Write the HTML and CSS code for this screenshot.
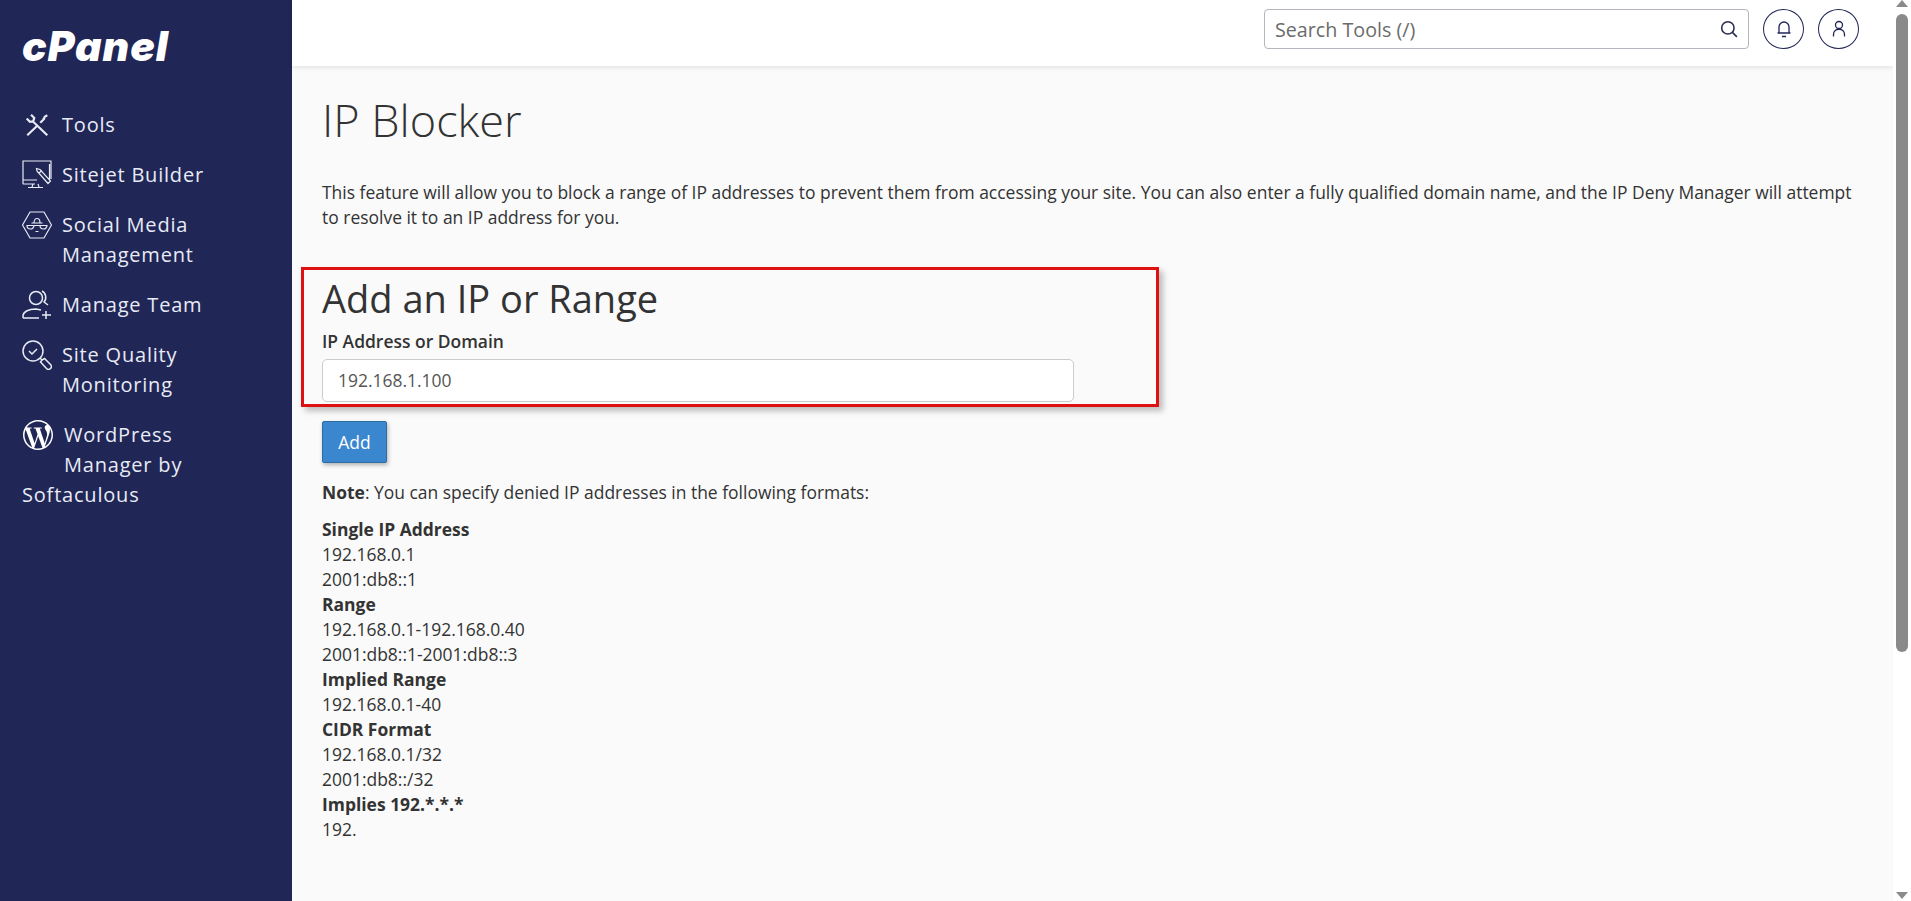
FILE: index.html
```html
<!DOCTYPE html>
<html lang="en">
<head>
<meta charset="utf-8">
<title>IP Blocker</title>
<link rel="stylesheet" href="styles.css">
</head>
<body>
<aside class="sidebar">
  <div class="logo">cPanel</div>
  <nav class="nav">
    <a class="nav-item"><svg class="ico ico-tools" viewBox="0 0 24 24"><path d="M3 21.500 12 13M15 10l3.500-3.500.5-2 2.500-1.500M17.500 5.500l1.500 1.500M2.500 6 5.500 9l3-.5 1-3L6.500 2.500M8 8.500 21.500 21.500"/></svg><span class="nav-text">Tools</span></a>
    <a class="nav-item"><svg class="ico" viewBox="0 0 30 30"><path d="M13 24H1.500a1 1 0 0 1-.5-1V1h28v18M1 20h14M11 24l-1 3M16 24l1 3M6 27.500h15M27.500 20V4M15 11l11 12.500 2.500-2.500L18 9.500l-3.500-1zM17 13l3-2.500"/></svg><span class="nav-text">Sitejet Builder</span></a>
    <a class="nav-item"><svg class="ico" viewBox="0 0 30 30"><path d="M8 2h14l7.500 13L22 28H8L.5 15zM9.500 13h11M12 13c0-6 6-6 6 0M5 15.500h7a3.500 3.500 0 0 1-7 0zM18 15.500h7a3.500 3.500 0 0 1-7 0zM12 15.500h6M13.500 21.500h3"/></svg><span class="nav-text">Social Media<br>Management</span></a>
    <a class="nav-item"><svg class="ico ico-bold" viewBox="0 0 30 30"><circle cx="14" cy="8" r="6.500"/><path d="M20 1c4 2 5 8 2 11l4 3M1 28v-2c0-4 5-7 13-7l5 1M1 28h16M24 21v8M20 25h9"/></svg><span class="nav-text">Manage Team</span></a>
    <a class="nav-item"><svg class="ico ico-bold" viewBox="0 0 30 30"><circle cx="11" cy="11" r="10"/><path d="M7 11l3 3 5-5M18 18l2 2M20 20l-1.500 2 6 6.500a2 2 0 0 0 4-4l-6-6z"/></svg><span class="nav-text">Site Quality<br>Monitoring</span></a>
    <a class="nav-wp"><svg class="ico ico-wp" viewBox="0 0 24 24"><path d="M21.469 6.825c.84 1.537 1.318 3.3 1.318 5.175 0 3.979-2.156 7.456-5.363 9.325l3.295-9.527c.615-1.54.82-2.771.82-3.864 0-.405-.026-.78-.07-1.11m-7.981.105c.647-.03 1.232-.105 1.232-.105.582-.075.514-.93-.067-.899 0 0-1.755.135-2.88.135-1.064 0-2.85-.15-2.85-.15-.585-.03-.661.855-.075.885 0 0 .54.061 1.125.09l1.68 4.605-2.37 7.08L5.354 6.9c.649-.03 1.234-.1 1.234-.1.585-.075.516-.93-.065-.896 0 0-1.746.138-2.874.138-.2 0-.438-.008-.69-.015C4.911 3.15 8.235 1.215 12 1.215c2.809 0 5.365 1.072 7.286 2.833-.046-.003-.091-.009-.141-.009-1.06 0-1.812.923-1.812 1.914 0 .89.513 1.643 1.06 2.531.411.72.89 1.643.89 2.977 0 .915-.354 1.994-.821 3.479l-1.075 3.585-3.9-11.61.001.014zM12 22.784c-1.059 0-2.081-.153-3.048-.437l3.237-9.406 3.315 9.087c.024.053.05.101.078.149-1.12.393-2.325.609-3.582.609M1.211 12c0-1.564.336-3.05.935-4.39L7.29 21.709C3.694 19.96 1.212 16.271 1.211 12M12 0C5.385 0 0 5.385 0 12s5.385 12 12 12 12-5.385 12-12S18.615 0 12 0"/></svg>WordPress<br>Manager by<br>Softaculous</a>
  </nav>
</aside>
<div class="main">
  <header class="topbar">
    <div class="search">
      <span>Search Tools (/)</span>
      <svg class="search-ico" viewBox="0 0 16 16"><circle cx="7" cy="7" r="5.500"/><path d="M11 11l4 4"/></svg>
    </div>
    <button class="round"><svg viewBox="0 0 16 18"><path d="M3 13V7a5 5 0 0 1 10 0v6zM1.500 13h13M6 16.500h4"/></svg></button>
    <button class="round"><svg viewBox="0 0 16 18"><circle cx="8" cy="5" r="3.500"/><path d="M2.500 16.500v-2c0-7 11-7 11 0v2"/></svg></button>
  </header>
  <main class="content">
    <h1 class="title">IP Blocker</h1>
    <p class="intro">This feature will allow you to block a range of IP addresses to prevent them from accessing your site. You can also enter a fully qualified domain name, and the IP Deny Manager will attempt to resolve it to an IP address for you.</p>
    <section class="highlight">
      <h2 class="subtitle">Add an IP or Range</h2>
      <label class="field-label">IP Address or Domain</label>
      <div class="field">192.168.1.100</div>
    </section>
    <button class="add">Add</button>
    <p class="note"><b>Note</b>: You can specify denied IP addresses in the following formats:</p>
    <div class="formats">
      <b>Single IP Address</b><br>192.168.0.1<br>2001:db8::1<br>
      <b>Range</b><br>192.168.0.1-192.168.0.40<br>2001:db8::1-2001:db8::3<br>
      <b>Implied Range</b><br>192.168.0.1-40<br>
      <b>CIDR Format</b><br>192.168.0.1/32<br>2001:db8::/32<br>
      <b>Implies 192.*.*.*</b><br>192.
    </div>
  </main>
</div>
<div class="scrollbar">
  <span class="arrow-up"></span>
  <span class="thumb"></span>
  <span class="arrow-down"></span>
</div>
</body>
</html>
```
FILE: styles.css
```css
* { box-sizing: border-box; }
html, body { height: 100%; margin: 0; }
body {
  display: flex;
  height: 901px;
  overflow: hidden;
  font-family: "Open Sans", sans-serif;
  font-size: 17.470px;
  line-height: 25px;
  color: #333;
  background: #fafafa;
}
.sidebar {
  flex: 0 0 292px;
  background: #202655;
  color: #e8ebf5;
  padding: 0 22px;
}
.logo {
  height: 110px;
  padding-top: 21px;
  font-family: "Inter", sans-serif;
  font-style: italic;
  font-weight: 900;
  font-size: 41px;
  line-height: 50px;
  letter-spacing: 1px;
  color: #fff;
}
.nav { display: flex; flex-direction: column; gap: 20px; font-size: 20px; line-height: 30px; letter-spacing: .8px; }
.nav-item { display: flex; align-items: flex-start; }
.ico {
  flex: 0 0 30px;
  width: 30px;
  height: 30px;
  margin-right: 10px;
  fill: none;
  stroke: #e8ebf5;
  stroke-width: 1.200;
}
.ico-bold { stroke-width: 1.500; }
.ico-tools { stroke-width: 2; padding: 2px; }
.nav-wp { display: block; }
.ico-wp { float: left; margin: 0 11px 10px 1px; stroke: none; fill: #fff; }
.main { flex: 1; display: flex; flex-direction: column; min-width: 0; }
.topbar {
  flex: 0 0 66px;
  height: 66px;
  background: #fff;
  box-shadow: 0 1px 5px rgba(0,0,0,.12);
  display: flex;
  align-items: center;
  justify-content: flex-end;
  padding: 0 34px 8px 0;
  gap: 14px;
}
.search {
  width: 485px;
  height: 40px;
  border: 1px solid #b5b5bd;
  border-radius: 4px;
  display: flex;
  align-items: center;
  justify-content: space-between;
  padding: 0 10px;
  font-size: 19.700px;
  color: #6b6b6b;
}
.search-ico { width: 18px; height: 18px; fill: none; stroke: #2a2f52; stroke-width: 1.400; }
.round {
  width: 41px;
  height: 40px;
  padding: 0;
  border: 1px solid #202655;
  border-radius: 50%;
  background: #fff;
  display: flex;
  align-items: center;
  justify-content: center;
}
.round svg { width: 16px; height: 18px; fill: none; stroke: #202655; stroke-width: 1.300; }
.content { padding: 0 30px; }
.title {
  margin: 21px 0 27px;
  font-size: 45px;
  line-height: 66px;
  font-weight: 300;
  color: #333;
}
.intro { margin: 0 0 37px; }
.highlight {
  width: 858px;
  height: 140px;
  margin: 0 0 14px -21px;
  padding: 4px 0 0 18px;
  border: 3px solid #dd1111;
  box-shadow: 4px 4px 6px rgba(0,0,0,.25);
}
.subtitle { margin: 0; font-size: 38px; line-height: 48px; font-weight: 400; color: #333; }
.field-label { display: block; margin-top: 6px; font-weight: 600; line-height: 26px; }
.field {
  width: 752px;
  height: 43px;
  margin-top: 5px;
  padding: 0 15px;
  background: #fff;
  border: 1px solid #ccc;
  border-radius: 5px;
  line-height: 41px;
  color: #555;
}
.add {
  display: block;
  width: 65px;
  height: 42px;
  padding: 0;
  background: #3a87cf;
  color: #fff;
  border: 1px solid #2e6da4;
  border-radius: 2px;
  box-shadow: 1px 2px 4px rgba(0,0,0,.3);
  font: 400 17.470px "Open Sans", sans-serif;
}
.note { margin: 17px 0 12px; }
.formats b, .note b { font-weight: 700; }
.scrollbar {
  position: relative;
  flex: 0 0 18px;
  background: #fff;
}
.thumb {
  position: absolute;
  left: 3px;
  top: 14px;
  width: 12px;
  height: 638px;
  background: #8a8a8a;
  border-radius: 6px;
}
.arrow-up, .arrow-down {
  position: absolute;
  left: 3px;
  width: 0;
  height: 0;
  border-left: 6px solid transparent;
  border-right: 6px solid transparent;
}
.arrow-up { top: 0; border-bottom: 7px solid #8a8a8a; }
.arrow-down { bottom: 2px; border-top: 7px solid #8a8a8a; }
```
